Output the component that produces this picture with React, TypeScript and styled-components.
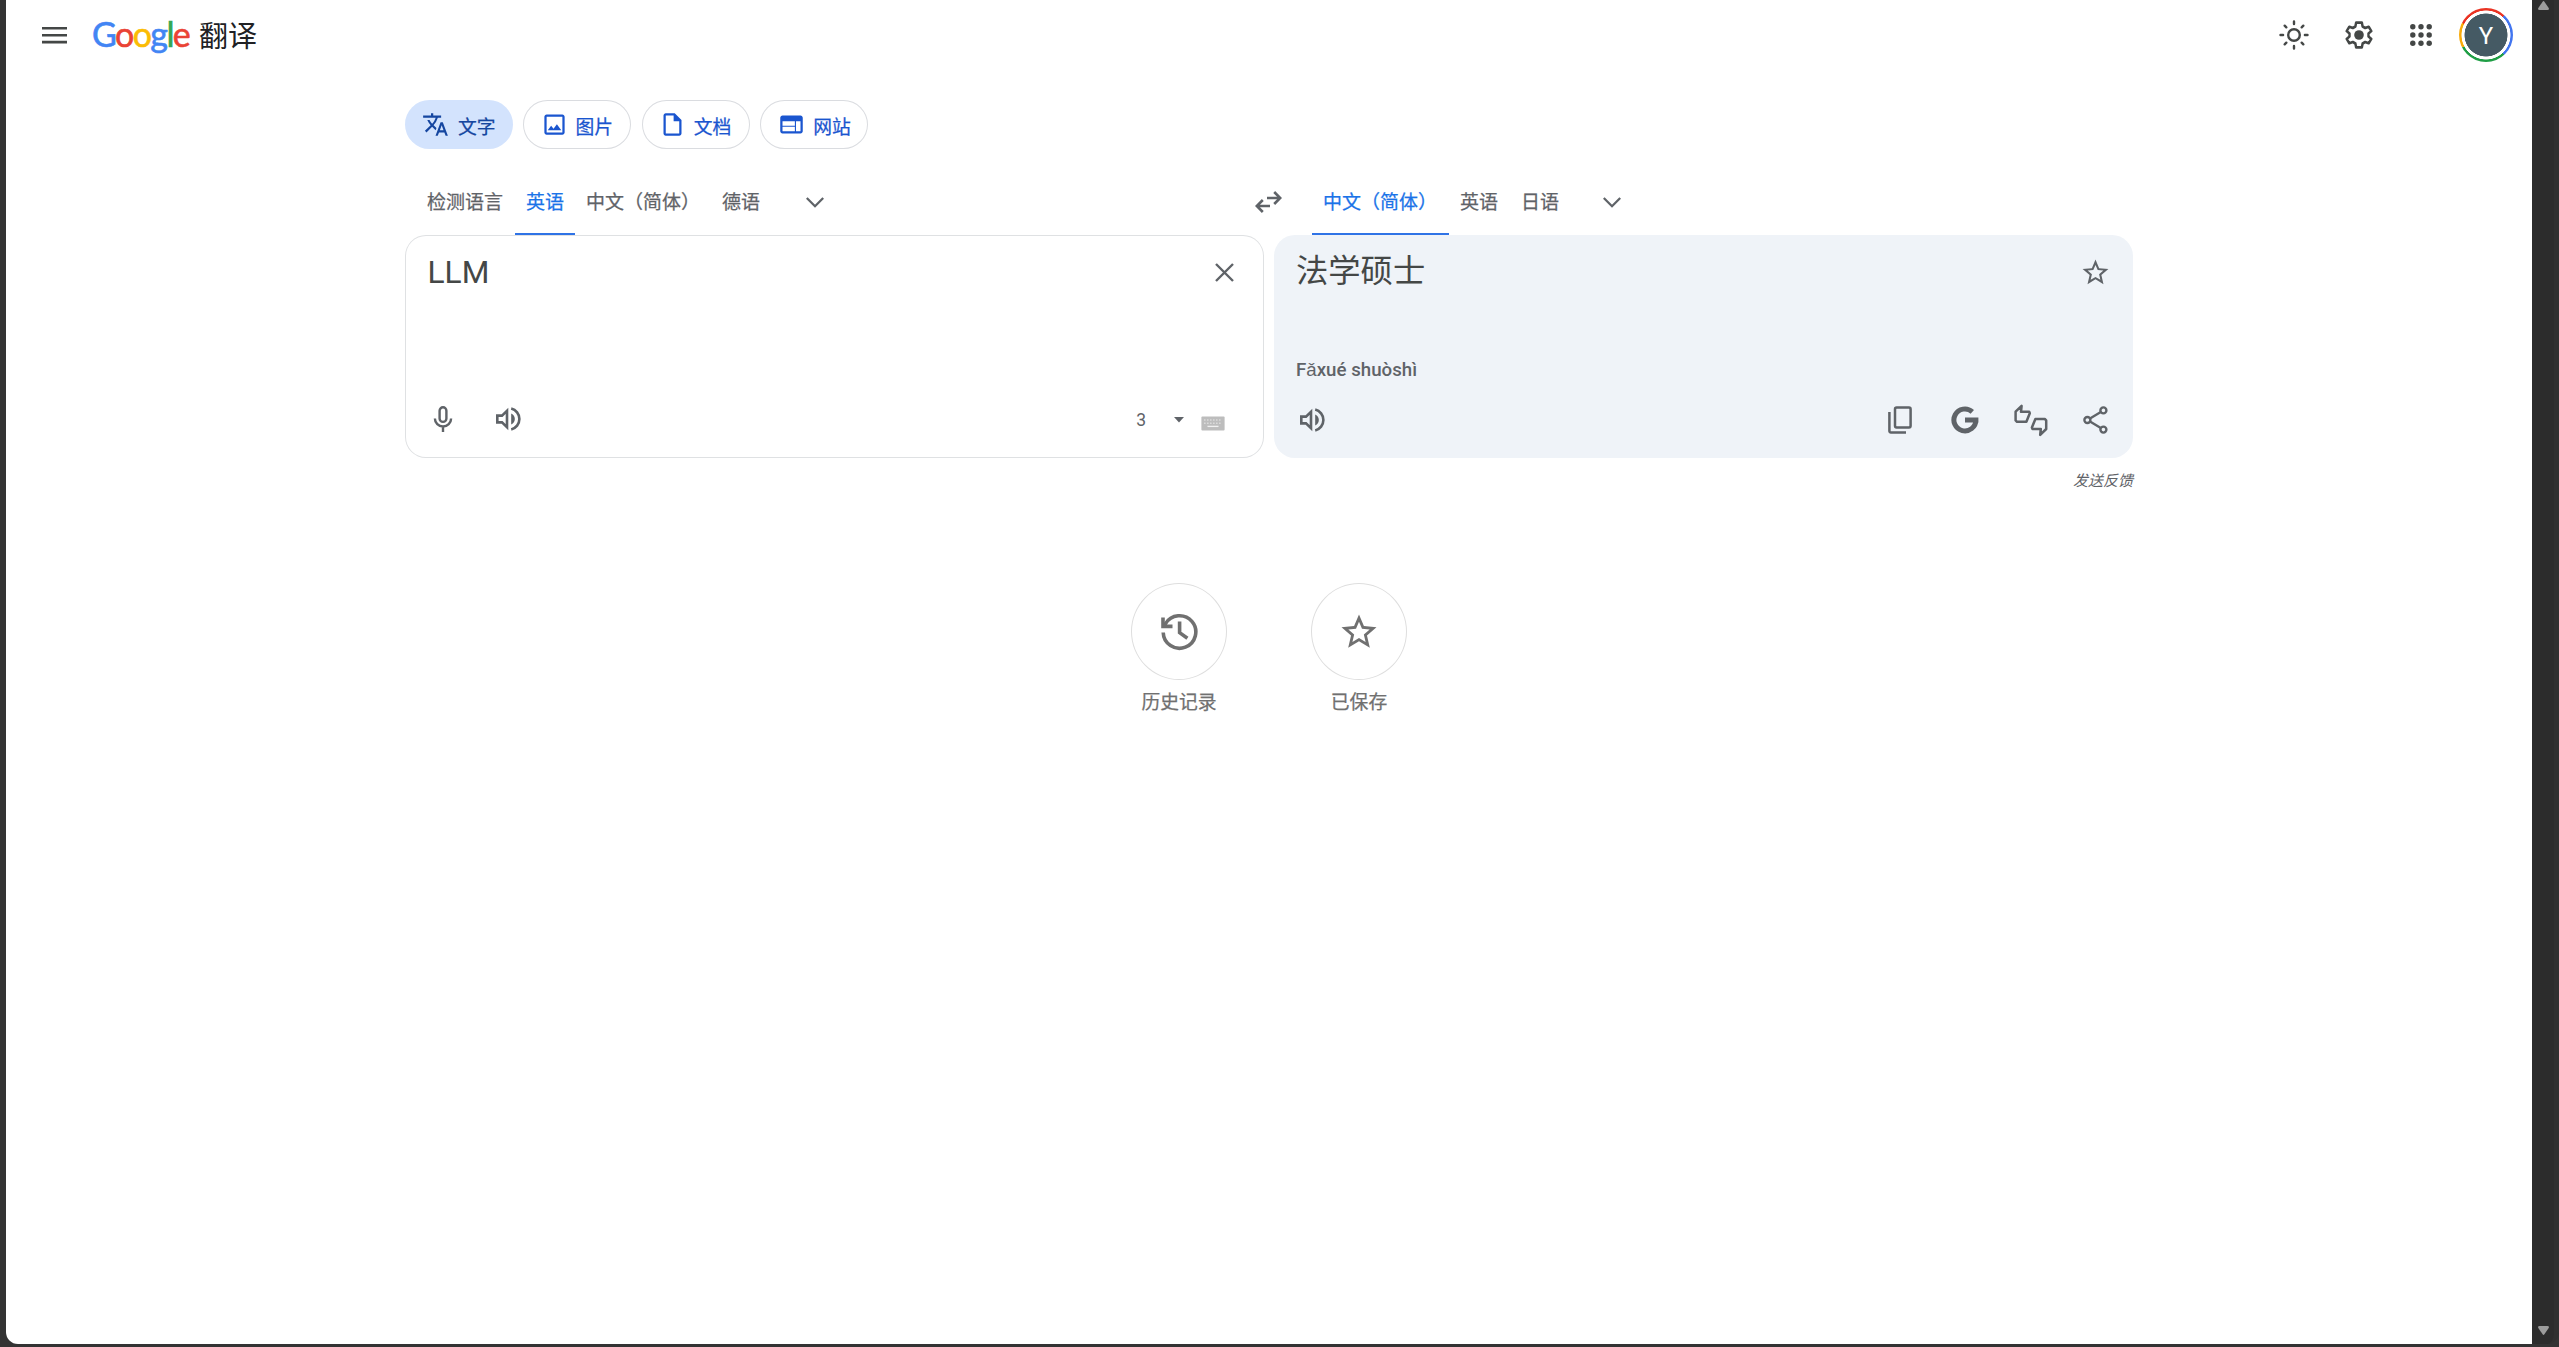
import React from "react";
import styled, { createGlobalStyle } from "styled-components";
import {
  MdTranslate,
  MdOutlineImage,
  MdOutlineInsertDriveFile,
  MdWeb,
  MdStarOutline,
} from "react-icons/md";

const sans = `Roboto, "Noto Sans CJK SC", sans-serif`;

const GlobalStyle = createGlobalStyle`
  * { box-sizing: border-box; }
  body { margin: 0; background: #333333; overflow: hidden; font-family: ${sans}; }
  button { font: inherit; border: 0; background: none; padding: 0; margin: 0; color: inherit; }
  svg { display: block; flex: none; }
`;

const Window = styled.div`
  display: flex;
  height: 1347px;
  padding: 0 0 3px 6px;
  background: #333333;
`;
const Page = styled.div`
  width: 2526px;
  flex: none;
  background: #fff;
  border-bottom-left-radius: 12px;
`;
const Scrollbar = styled.div`
  flex: 1;
  display: flex;
  flex-direction: column;
  justify-content: space-between;
  align-items: flex-start;
  padding: 1px 0 9px 6px;
  background: #2c2c2c;
  border-right: 5px solid #303030;
  border-bottom-right-radius: 12px;
`;

const Header = styled.header`
  display: flex;
  align-items: center;
  height: 70px;
  padding: 0 19px 0 36px;
`;
const Brand = styled.div`
  display: flex;
  align-items: center;
  margin-left: 25px;
  height: 70px;
  padding-bottom: 3px;
`;
const Wordmark = styled.div`
  width: 107px;
  font: 400 34px/40px Lato, sans-serif;
  letter-spacing: -1.6px;
  -webkit-text-stroke: 0.6px currentColor;
  white-space: nowrap;
`;
const Letter = styled.span<{ $c: string }>`
  color: ${(p) => p.$c};
`;
const Product = styled.span`
  font: 400 29px/40px "Noto Sans CJK SC", sans-serif;
  color: #202124;
`;
const HeaderTools = styled.div`
  display: flex;
  align-items: center;
  margin-left: auto;
`;
const ToolButton = styled.button<{ $gap: number }>`
  margin-right: ${(p) => p.$gap}px;
  color: #444746;
`;
const Avatar = styled.div`
  display: grid;
  place-items: center;
  width: 54px;
  height: 54px;
  border-radius: 50%;
  background: radial-gradient(circle, #455a64 21.2px, #fff 21.8px, #fff 24.2px, transparent 24.8px),
    conic-gradient(#ea3323 0 42deg, #4175f0 42deg 138deg, #1f9e45 138deg 242deg, #f9ab0b 242deg 297deg, #ea3323 297deg);
  color: #fff;
  font: 400 24px/56px Roboto, sans-serif;
`;

const Main = styled.main`
  width: 1728px;
  margin-left: 399px;
  padding-top: 30px;
`;
const Modes = styled.nav`
  display: flex;
  gap: 10.4px;
`;
const Chip = styled.button<{ $active?: boolean; $pad: number; $gap: number }>`
  display: flex;
  align-items: center;
  width: 108px;
  height: 49px;
  padding-left: ${(p) => p.$pad}px;
  gap: ${(p) => p.$gap}px;
  border-radius: 25px;
  box-shadow: ${(p) => (p.$active ? "none" : "inset 0 0 0 1px #dadce0")};
  background: ${(p) => (p.$active ? "#d3e3fd" : "#fff")};
  color: ${(p) => (p.$active ? "#1546a0" : "#1a55cf")};
  font-size: 18.8px;
  font-weight: 400;
  -webkit-text-stroke: 0.25px currentColor;
  white-space: nowrap;
  span { padding-top: 2px; }
`;

const Languages = styled.div`
  display: flex;
  height: 65px;
  margin-top: 21px;
`;
const LanguageGroup = styled.div<{ $w: number }>`
  display: flex;
  align-items: stretch;
  width: ${(p) => p.$w}px;
`;
const Tab = styled.button<{ $w: number; $active?: boolean }>`
  width: ${(p) => p.$w}px;
  flex: none;
  padding: 0 0 3px 11px;
  text-align: left;
  white-space: nowrap;
  font-size: 19px;
  font-weight: 400;
  -webkit-text-stroke: 0.25px currentColor;
  color: ${(p) => (p.$active ? "#1a73e8" : "#5f6368")};
  border-bottom: 2px solid ${(p) => (p.$active ? "#2f73e6" : "transparent")};
`;
const Inset = styled.div`
  width: 11px;
`;
const IconSlot = styled.button<{ $ml: number }>`
  display: flex;
  align-items: center;
  margin-left: ${(p) => p.$ml}px;
  padding-bottom: 1px;
  color: #5f6368;
`;

const Panels = styled.div`
  display: flex;
  gap: 10px;
`;
const Panel = styled.section<{ $filled?: boolean }>`
  display: flex;
  flex-direction: column;
  width: 859px;
  height: 223px;
  border-radius: 21px;
  padding-left: 22px;
  background: ${(p) => (p.$filled ? "#eff3f8" : "#fff")};
  box-shadow: ${(p) => (p.$filled ? "none" : "inset 0 0 0 1px #dfe1e3")};
`;
const TextRow = styled.div<{ $right: number }>`
  display: flex;
  align-items: center;
  justify-content: space-between;
  height: 75px;
  padding-right: ${(p) => p.$right}px;
  color: #5f6368;
`;
const Phrase = styled.span<{ $cjk?: boolean }>`
  font-size: ${(p) => (p.$cjk ? 32.3 : 31.7)}px;
  line-height: 40px;
  color: #444746;
  margin: ${(p) => (p.$cjk ? "-3px 0 0" : "1px 0 0 .5px")};
`;
const Pinyin = styled.div`
  height: 20px;
  margin-top: 50px;
  font: 500 18.7px/20px Roboto, sans-serif;
  color: #5f6368;
`;
const Actions = styled.div<{ $right: number }>`
  display: flex;
  align-items: center;
  height: 32px;
  margin: auto 0 22px;
  padding-right: ${(p) => p.$right}px;
  color: #5f6368;
`;
const ActionGroup = styled.div<{ $gap: number }>`
  display: flex;
  align-items: center;
  gap: ${(p) => p.$gap}px;
  margin-left: auto;
`;
const Action = styled.button<{ $ml?: number; $mb?: number; $mt?: number }>`
  margin: ${(p) => p.$mt ?? 0}px 0 ${(p) => p.$mb ?? 0}px ${(p) => p.$ml ?? 0}px;
`;
const Counter = styled.span`
  margin-left: auto;
  font-size: 17.5px;
`;
const Feedback = styled.div`
  margin-top: 10px;
  text-align: right;
  font: italic 400 15px/24px "Noto Sans CJK SC", sans-serif;
  color: #5f6368;
`;

const Shortcuts = styled.div`
  display: flex;
  justify-content: center;
  gap: 84px;
  margin-top: 91px;
`;
const Shortcut = styled.div`
  display: flex;
  flex-direction: column;
  align-items: center;
  width: 96px;
  color: #707070;
  font-size: 18.8px;
  -webkit-text-stroke: 0.25px currentColor;
  line-height: 28px;
  white-space: nowrap;
`;
const Round = styled.button`
  display: grid;
  place-items: center;
  width: 96px;
  height: 97px;
  margin-bottom: 9px;
  border: 1px solid #dedede;
  border-radius: 50%;
`;

const MenuIcon = () => (
  <svg width="25" height="17" viewBox="0 0 25 17" fill="currentColor">
    <path d="M0 0h25v2.6H0zM0 6.9h25v2.6H0zM0 13.8h25v2.6H0z" />
  </svg>
);
const SunIcon = () => (
  <svg width="30" height="30" viewBox="-15 -15 30 30" fill="none" stroke="currentColor" strokeWidth="2.4">
    <circle r="5.8" />
    <path
      strokeLinecap="round"
      d="M0-10.9v-2.6M0 10.9v2.6M-10.9 0h-2.6M10.9 0h2.6M-7.7-7.7l-1.6-1.6M7.7-7.7l1.6-1.6M-7.7 7.7l-1.6 1.6M7.7 7.7l1.6 1.6"
    />
  </svg>
);
const GearIcon = () => (
  <svg width="28" height="28" viewBox="-14 -14 28 28">
    <path
      fill="none"
      stroke="currentColor"
      strokeWidth="2.6"
      strokeLinejoin="round"
      d="M-3-12.4H3L3.8-8.5L6.5-7L10.2-8.3L13-3.9L10-1.4V1.4L13 3.9L10.2 8.3L6.5 7L3.8 8.5L3 12.4H-3L-3.8 8.5L-6.5 7L-10.2 8.3L-13 3.9L-10 1.4V-1.4L-13-3.9L-10.2-8.3L-6.5-7L-3.8-8.5Z"
      transform="scale(.95 1)"
    />
    <circle r="4.8" fill="currentColor" />
  </svg>
);
const AppsIcon = () => (
  <svg width="22" height="22" viewBox="-11 -11 22 22" fill="currentColor">
    {[-8.2, 0, 8.2].map((y) => [-8.2, 0, 8.2].map((x) => <circle key={`${x},${y}`} cx={x} cy={y} r="2.7" />))}
  </svg>
);
const ChevronIcon = () => (
  <svg width="18" height="11" viewBox="0 0 18 11" fill="none" stroke="currentColor" strokeWidth="2.3">
    <path d="M.8 1L9 9.2L17.2 1" />
  </svg>
);
const SwapIcon = () => (
  <svg width="27" height="22" viewBox="0 0 27 22" fill="none" stroke="currentColor" strokeWidth="2.6">
    <path d="M12 7H25M19.2 1L25.2 7L19.2 13M15 15H2M7.8 9L1.8 15L7.8 21" />
  </svg>
);
const CloseIcon = () => (
  <svg width="19" height="19" viewBox="0 0 19 19" fill="none" stroke="currentColor" strokeWidth="2.4">
    <path d="M1 1L18 18M18 1L1 18" />
  </svg>
);
const MicIcon = () => (
  <svg width="20" height="26" viewBox="0 0 20 26" fill="none" stroke="currentColor" strokeWidth="2.4">
    <rect x="6.6" y="1.3" width="6.8" height="14.6" rx="3.4" />
    <path d="M1.9 12.4a8.1 8.1 0 0 0 16.2 0M10 20.5V26" />
  </svg>
);
const SpeakerIcon = () => (
  <svg width="25" height="24" viewBox="0 0 25 24">
    <path
      fill="none"
      stroke="currentColor"
      strokeWidth="2.6"
      d="M1.3 8.6H6L11 3.8V20.2L6 15.4H1.3ZM15.2 1.6a10.7 10.7 0 0 1 0 20.8"
    />
    <path fill="currentColor" d="M15.2 6.5a6 6 0 0 1 0 11Z" />
  </svg>
);
const CaretIcon = () => (
  <svg width="10" height="6" viewBox="0 0 10 6">
    <path fill="currentColor" d="M0 0H10L5 5.6Z" />
  </svg>
);
const KeyboardIcon = () => (
  <svg width="24" height="15" viewBox="0 0 24 15">
    <rect x=".4" y=".4" width="23.2" height="14.2" rx="1" fill="#bdbdbd" />
    <path stroke="#dadada" strokeWidth="1.5" strokeDasharray="1.6 1.4" d="M3 4H21M3 7.2H21" />
    <path stroke="#f0f0f0" strokeWidth="1.3" d="M6.5 10.4H17.5" />
  </svg>
);
const CopyIcon = () => (
  <svg width="24" height="28" viewBox="0 0 24 28" fill="none" stroke="currentColor" strokeWidth="2.5">
    <rect x="7" y="1.6" width="15.6" height="19.8" rx="1.6" />
    <path d="M1.4 6V25a1.5 1.5 0 0 0 1.5 1.5H18" />
  </svg>
);
const SearchGIcon = () => (
  <svg width="28" height="28" viewBox="-14 -14 28 28" fill="none" stroke="currentColor" strokeWidth="5">
    <path d="M7.3-8.2A11 11 0 1 0 10.9 0M0 0H13.4" />
  </svg>
);
const ThumbsIcon = () => (
  <svg width="34" height="33" viewBox="0 0 34 33" fill="none" stroke="currentColor" strokeWidth="2.5" strokeLinejoin="round">
    <path d="M1.6 7.7L7.6 1.8L7 7.8H15.2L15.8 9.3L12.4 17.8H3L1.6 16.4Z" />
    <path d="M32.2 25L26.2 30.9L26.8 25H18.5L17.9 23.5L21.4 15H30.8L32.2 16.4Z" />
  </svg>
);
const ShareIcon = () => (
  <svg width="25" height="28" viewBox="0 0 25 28" fill="none" stroke="currentColor" strokeWidth="2.4">
    <circle cx="4.4" cy="14" r="3" />
    <circle cx="20.4" cy="4.4" r="3" />
    <circle cx="20.4" cy="23.6" r="3" />
    <path d="M7 12.5L17.8 6M7 15.5L17.8 22" />
  </svg>
);
const HistoryIcon = () => (
  <svg width="37" height="38" viewBox="0 0 37 38" fill="none" stroke="currentColor" strokeWidth="3.6">
    <path d="M2.2 19.5A16.3 16.3 0 1 0 4.4 10.8L3.2 13" />
    <path d="M2 4.5V13.4H11.5M18.6 8.5V19.6L26.4 25.2" />
  </svg>
);
const ScrollArrow = ({ down }: { down?: boolean }) => (
  <svg width="11" height="9" viewBox="0 0 11 9">
    <path
      fill="#9c9c9c"
      d="M4.6.7Q5.5-.5 6.4.7L10.7 7Q11.5 9 9.5 9H1.5Q-.5 9 .3 7Z"
      transform={down ? "rotate(180 5.5 4.5)" : undefined}
    />
  </svg>
);

const wordmark: [string, string][] = [
  ["G", "#4285f4"],
  ["o", "#ea4335"],
  ["o", "#fbbc04"],
  ["g", "#4285f4"],
  ["l", "#34a853"],
  ["e", "#ea4335"],
];

export default function App() {
  return (
    <>
      <GlobalStyle />
      <Window>
        <Page>
          <Header>
            <ToolButton $gap={0}><MenuIcon /></ToolButton>
            <Brand>
              <Wordmark>
                {wordmark.map(([ch, c], i) => (
                  <Letter key={i} $c={c}>{ch}</Letter>
                ))}
              </Wordmark>
              <Product>翻译</Product>
            </Brand>
            <HeaderTools>
              <ToolButton $gap={36}><SunIcon /></ToolButton>
              <ToolButton $gap={37}><GearIcon /></ToolButton>
              <ToolButton $gap={27}><AppsIcon /></ToolButton>
              <Avatar>Y</Avatar>
            </HeaderTools>
          </Header>
          <Main>
            <Modes>
              <Chip $active $pad={17} $gap={9}><MdTranslate size={27} /><span>文字</span></Chip>
              <Chip $pad={18} $gap={7}><MdOutlineImage size={27} /><span>图片</span></Chip>
              <Chip $pad={17} $gap={8}><MdOutlineInsertDriveFile size={27} /><span>文档</span></Chip>
              <Chip $pad={18} $gap={8}><MdWeb size={27} /><span>网站</span></Chip>
            </Modes>
            <Languages>
              <LanguageGroup $w={907}>
                <Inset />
                <Tab $w={99}>检测语言</Tab>
                <Tab $w={60} $active>英语</Tab>
                <Tab $w={136}>中文（简体）</Tab>
                <Tab $w={60}>德语</Tab>
                <IconSlot $ml={35}><ChevronIcon /></IconSlot>
                <IconSlot $ml={431}><SwapIcon /></IconSlot>
              </LanguageGroup>
              <LanguageGroup $w={821}>
                <Tab $w={137} $active>中文（简体）</Tab>
                <Tab $w={61}>英语</Tab>
                <Tab $w={60}>日语</Tab>
                <IconSlot $ml={33}><ChevronIcon /></IconSlot>
              </LanguageGroup>
            </Languages>
            <Panels>
              <Panel>
                <TextRow $right={30}>
                  <Phrase>LLM</Phrase>
                  <CloseIcon />
                </TextRow>
                <Actions $right={39}>
                  <Action $ml={6} $mb={3}><MicIcon /></Action>
                  <Action $ml={43} $mb={2}><SpeakerIcon /></Action>
                  <Counter>3</Counter>
                  <Action $ml={28}><CaretIcon /></Action>
                  <Action $ml={17} $mt={6}><KeyboardIcon /></Action>
                </Actions>
              </Panel>
              <Panel $filled>
                <TextRow $right={22}>
                  <Phrase $cjk>法学硕士</Phrase>
                  <MdStarOutline size={31} />
                </TextRow>
                <Pinyin>Fǎxué shuòshì</Pinyin>
                <Actions $right={25}>
                  <Action $ml={4}><SpeakerIcon /></Action>
                  <ActionGroup $gap={35}>
                    <Action><CopyIcon /></Action>
                    <Action $ml={4}><SearchGIcon /></Action>
                    <Action><ThumbsIcon /></Action>
                    <Action><ShareIcon /></Action>
                  </ActionGroup>
                </Actions>
              </Panel>
            </Panels>
            <Feedback>发送反馈</Feedback>
            <Shortcuts>
              <Shortcut>
                <Round><HistoryIcon /></Round>
                历史记录
              </Shortcut>
              <Shortcut>
                <Round><MdStarOutline size={42} /></Round>
                已保存
              </Shortcut>
            </Shortcuts>
          </Main>
        </Page>
        <Scrollbar>
          <ScrollArrow />
          <ScrollArrow down />
        </Scrollbar>
      </Window>
    </>
  );
}
